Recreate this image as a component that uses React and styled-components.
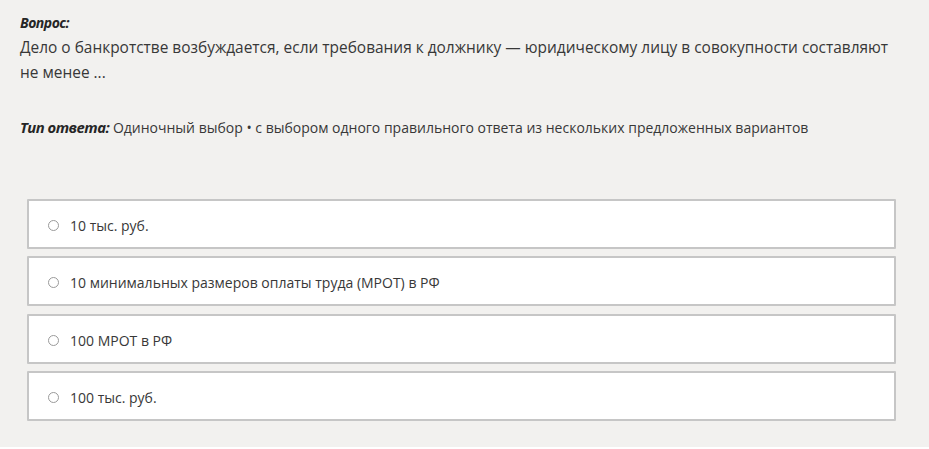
import React from 'react';
import styled, { createGlobalStyle } from 'styled-components';

const GlobalStyle = createGlobalStyle`
  body {
    margin: 0;
    background: #fff;
    font-family: "Open Sans", "Noto Sans", sans-serif;
  }
`;

const Page = styled.div`
  height: 447px;
  background: #f2f1ef;
  color: #383838;
  padding: 10px 20px 0 20px;
  box-sizing: border-box;
  font-size: 14px;
`;

const Label = styled.span`
  font-weight: 700;
  font-style: italic;
  font-size: ${(p) => p.$size || 14}px;
  letter-spacing: -0.5px;
  color: #262626;
`;

const Question = styled.div`
  line-height: 25px;
`;

const QuestionText = styled.div`
  font-size: 15.45px;
  max-width: 880px;
`;

const AnswerType = styled.div`
  margin-top: 32px;
  line-height: 20px;
`;

const Options = styled.div`
  display: flex;
  flex-direction: column;
  gap: 7.33px;
  margin: 61px 13px 0 7px;
`;

const Option = styled.label`
  display: flex;
  align-items: center;
  gap: 11px;
  height: 50px;
  box-sizing: border-box;
  padding: 3px 0 0 19px;
  background: #fff;
  border: 2px solid #c6c6c6;
  border-radius: 1px;
  cursor: pointer;
`;

const Radio = styled.span`
  width: 11px;
  height: 11px;
  box-sizing: border-box;
  border: 1.5px solid #9a9a9a;
  border-radius: 50%;
  flex-shrink: 0;
`;

const answers = [
  '10 тыс. руб.',
  '10 минимальных размеров оплаты труда (МРОТ) в РФ',
  '100 МРОТ в РФ',
  '100 тыс. руб.',
];

export default function App() {
  return (
    <>
      <GlobalStyle />
      <Page>
        <Question>
          <Label $size={14}>Вопрос:</Label>
          <QuestionText>
            Дело о банкротстве возбуждается, если требования к должнику — юридическому лицу в совокупности составляют не менее ...
          </QuestionText>
        </Question>
        <AnswerType>
          <Label $size={14.8}>Тип ответа:</Label> Одиночный выбор • с выбором одного правильного ответа из нескольких предложенных вариантов
        </AnswerType>
        <Options>
          {answers.map((text, i) => (
            <Option key={i}>
              <Radio />
              {text}
            </Option>
          ))}
        </Options>
      </Page>
    </>
  );
}
